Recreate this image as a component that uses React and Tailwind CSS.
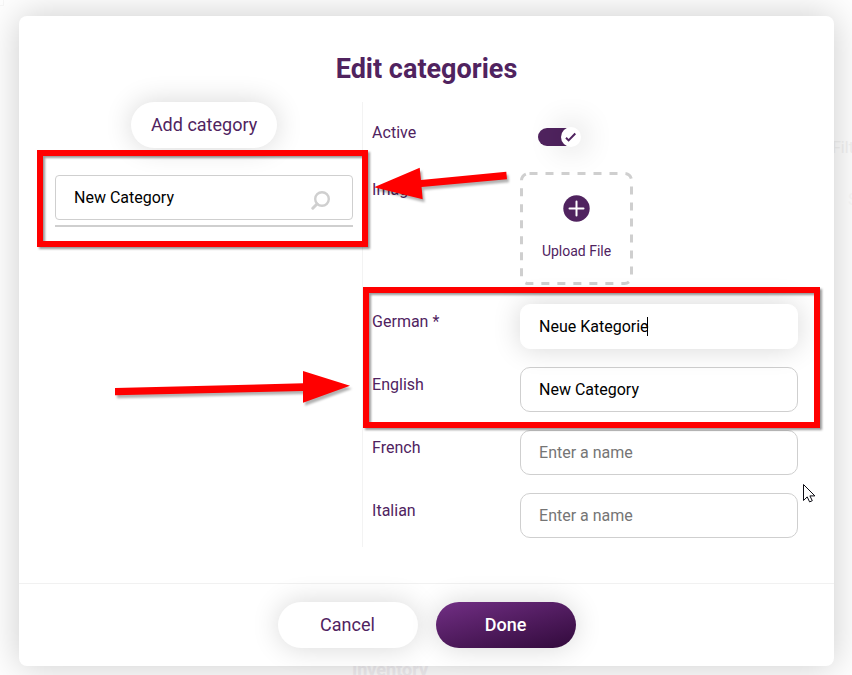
import {useState} from "react";
import clsx from "clsx";

const languages = [
    {id: "fr", label: "French"},
    {id: "it", label: "Italian"},
];

export default function App() {
    const [active, setActive] = useState(true);
    const [names, setNames] = useState({de: "Neue Kategorie", en: "New Category", fr: "", it: ""});

    const setName = (id, value) => setNames({...names, [id]: value});

    return (
        <main className="relative min-h-screen overflow-hidden bg-[#fefefe] pt-4 pr-[18px] pb-[9px] pl-[19px] font-['Roboto',sans-serif] text-base text-[#50235f]">
            <Backdrop/>

            <section
                role="dialog"
                aria-labelledby="dialog-title"
                className="relative rounded-lg bg-white shadow-[0_0_36px_rgba(0,0,0,0.2)]"
            >
                <h1 id="dialog-title" className="pt-[37px] text-center text-[27px] leading-8 font-bold">
                    Edit categories
                </h1>

                <div className="mt-[17px] flex px-[27px] pb-9">
                    <div className="relative w-5/12 border-r border-[#f3f3f3] px-[9px]">
                        <div className="flex justify-center">
                            <button className="h-[46px] rounded-full bg-white px-5 text-lg shadow-[0_0_28px_rgba(0,0,0,0.16)]">
                                Add category
                            </button>
                        </div>

                        <div className="relative mt-[27px] border-b-2 border-[#cfcfcf] pb-[5px]">
                            <button className="flex h-[45px] w-full items-center justify-between rounded-sm border border-[#cfcfcf] bg-white px-[18px] text-black">
                                New Category
                                <SearchIcon/>
                            </button>
                            <Highlight className="-top-[25px] -right-[15px] -bottom-[22px] -left-[18px]"/>
                        </div>

                        <svg
                            className="pointer-events-none absolute top-[266px] left-[69px] z-20 drop-shadow-[2px_3px_1px_rgba(0,0,0,0.3)]"
                            width="236"
                            height="36"
                            viewBox="0 0 236 36"
                            aria-hidden="true"
                        >
                            <path d="M0 20 188 15.3V3L235 17.7 188 34.7V23L0 27.3Z" fill="#f00"/>
                        </svg>
                    </div>

                    <div className="w-7/12 pt-1">
                        <Row label="Active" htmlFor="active">
                            <div className="flex h-[39px] items-start pt-3 pl-[18px]">
                                <Toggle checked={active} onChange={setActive}/>
                            </div>
                        </Row>

                        <div className="relative">
                            <Row label="Image" htmlFor="image">
                                <UploadBox/>
                            </Row>
                            <svg
                                className="pointer-events-none absolute top-1 left-[11px] z-20 drop-shadow-[2px_3px_1px_rgba(0,0,0,0.3)]"
                                width="134"
                                height="34"
                                viewBox="0 0 134 34"
                                aria-hidden="true"
                            >
                                <path d="M0 20.3 45.7.7 47 13 132.3 4.7 133 12.3 47.6 20 48.7 32.3Z" fill="#f00"/>
                            </svg>
                        </div>

                        <div className="relative">
                            <Row label="German *" htmlFor="de">
                                <div className="relative">
                                    <NameInput id="de" focused value={names.de} onChange={setName}/>
                                    <span className="absolute top-[13px] left-[127px] h-[19px] w-px bg-black"/>
                                </div>
                            </Row>
                            <Row label="English" htmlFor="en">
                                <NameInput id="en" value={names.en} onChange={setName}/>
                            </Row>
                            <Highlight className="-top-2 -right-[13px] -bottom-[7px] left-0"/>
                        </div>

                        {languages.map(({id, label}) => (
                            <Row key={id} label={label} htmlFor={id}>
                                <NameInput id={id} value={names[id]} onChange={setName}/>
                            </Row>
                        ))}
                    </div>
                </div>

                <footer className="flex justify-center gap-[18px] border-t border-[#f1f1f1] py-[18px] text-lg">
                    <button className="h-[46px] w-[140px] rounded-full bg-white shadow-[0_0_28px_rgba(0,0,0,0.16)]">
                        Cancel
                    </button>
                    <button className="h-[46px] w-[140px] rounded-full bg-linear-165 from-[#722f85] to-[#320a3c] font-medium text-white shadow-[0_0_28px_rgba(0,0,0,0.16)]">
                        Done
                    </button>
                </footer>

                <Cursor/>
            </section>
        </main>
    );
}

// Faded page behind the dialog
function Backdrop() {
    return (
        <div className="absolute inset-0 text-[#f2f2f2]" aria-hidden="true">
            <span className="absolute -top-2 -left-4 h-[14px] w-5 border border-[#f6f6f6]"/>
            <span className="absolute top-[136px] left-[832px]">Filt</span>
            <span className="absolute top-[188px] left-[848px] text-[#f8f8f8]">S</span>
            <span className="absolute top-[658px] left-[352px] text-lg leading-6 font-bold text-[#f1eff2]">Inventory</span>
        </div>
    );
}

function Row({label, htmlFor, children}) {
    return (
        <div className="flex py-[9px]">
            <label htmlFor={htmlFor} className="w-1/3 px-[9px] pt-[6px]">
                {label}
            </label>
            <div className="w-2/3 px-[9px]">{children}</div>
        </div>
    );
}

function NameInput({id, value, focused, onChange}) {
    return (
        <input
            id={id}
            type="text"
            value={value}
            placeholder="Enter a name"
            onChange={(event) => onChange(id, event.target.value)}
            className={clsx(
                "block h-[45px] w-full rounded-[10px] border bg-white px-[18px] text-black outline-none placeholder:text-[#757575]",
                focused ? "border-white caret-transparent shadow-[0_0_28px_rgba(0,0,0,0.16)]" : "border-[#cfcfcf]"
            )}
        />
    );
}

function Toggle({checked, onChange}) {
    return (
        <div className="relative flex h-5 w-[43px] items-center">
            <input
                id="active"
                type="checkbox"
                checked={checked}
                onChange={(event) => onChange(event.target.checked)}
                className="h-[18px] w-10 appearance-none rounded-full bg-[#cfcfcf] checked:bg-[#50235f]"
            />
            <span
                className={clsx(
                    "pointer-events-none absolute flex size-5 items-center justify-center rounded-full bg-white shadow-[0_0_32px_rgba(0,0,0,0.3)]",
                    checked ? "right-0" : "left-0"
                )}
            >
                <svg width="12" height="12" viewBox="0 0 12 12" fill="none" stroke="currentColor" strokeWidth="2">
                    <path d="M1 6.8 3.6 9.4 10.3 2.5"/>
                </svg>
            </span>
        </div>
    );
}

function UploadBox() {
    return (
        <label className="relative flex h-[114px] w-[113px] cursor-pointer flex-col items-center pt-[23px] text-sm">
            <svg className="absolute inset-0 size-full" fill="none" aria-hidden="true">
                <rect x="1.5" y="1.5" width="110" height="110" rx="7" stroke="#cfcfcf" strokeWidth="3" strokeDasharray="8 8" strokeDashoffset="-1"/>
            </svg>
            <svg width="27" height="27" viewBox="0 0 27 27" aria-hidden="true">
                <circle cx="13.5" cy="13.5" r="13.2" fill="#50235f"/>
                <path d="M13.5 6.5v14M6.5 13.5h14" stroke="#fff" strokeWidth="2" strokeLinecap="round"/>
            </svg>
            <span className="mt-[19px]">Upload File</span>
            <input id="image" type="file" className="sr-only"/>
        </label>
    );
}

function SearchIcon() {
    return (
        <svg className="mt-[6px] mr-1" width="19" height="19" viewBox="0 0 19 19" fill="none" stroke="#cfcfcf" aria-hidden="true">
            <circle cx="11" cy="8" r="6.8" strokeWidth="2.4"/>
            <path d="M6 13 1.8 17.2" strokeWidth="3" strokeLinecap="round"/>
        </svg>
    );
}

function Highlight({className}) {
    return (
        <div
            className={clsx(
                "pointer-events-none absolute z-10 border-6 border-[#f00] drop-shadow-[2px_2px_1px_rgba(0,0,0,0.4)]",
                className
            )}
        />
    );
}

function Cursor() {
    return (
        <svg
            className="pointer-events-none absolute top-[467px] right-[18px] z-20"
            width="13"
            height="20"
            viewBox="0 0 13 20"
            aria-hidden="true"
        >
            <path d="M.5 1.5v16l3.7-3.6 2.4 5 2.7-1.2-2.4-4.8h5z" fill="#fff" stroke="#0c0c14"/>
        </svg>
    );
}
